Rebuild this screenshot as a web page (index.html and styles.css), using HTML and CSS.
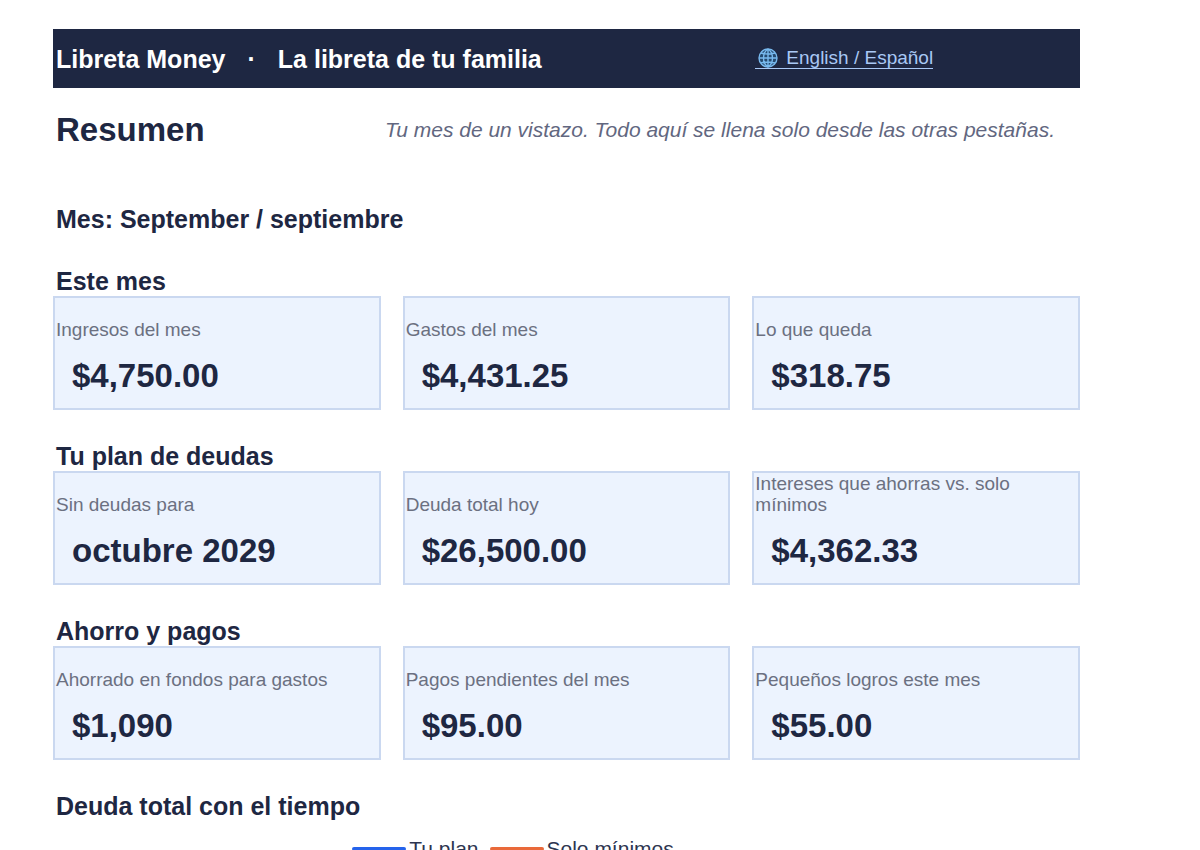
FILE: index.html
```html
<!DOCTYPE html>
<html lang="es">
<head>
<meta charset="utf-8">
<meta name="viewport" content="width=device-width, initial-scale=1">
<title>Libreta Money</title>
<link rel="stylesheet" href="styles.css">
</head>
<body>
<div class="page">
  <header class="banner">
    <div class="brand"><span>Libreta Money</span><span>·</span><span>La libreta de tu familia</span></div>
    <a class="language" href="#"><svg class="globe" viewBox="0 0 20 20" aria-hidden="true"><circle class="globe-fill" cx="10" cy="10" r="9"/><path d="M10 1v18M1 10h18M3 5q7 2 14 0M3 15q7-2 14 0M10 1C4 5 4 15 10 19M10 1c6 4 6 14 0 18"/><circle cx="10" cy="10" r="9"/></svg>English / Español</a>
  </header>
  <main>
    <div class="intro">
      <h1 class="title">Resumen</h1>
      <p class="tagline">Tu mes de un vistazo. Todo aquí se llena solo desde las otras pestañas.</p>
    </div>
    <h2 class="heading month">Mes: September / septiembre</h2>
    <section>
      <h2 class="heading">Este mes</h2>
      <dl class="cards">
        <div class="card"><dt class="label">Ingresos del mes</dt><dd class="value">$4,750.00</dd></div>
        <div class="card"><dt class="label">Gastos del mes</dt><dd class="value">$4,431.25</dd></div>
        <div class="card"><dt class="label">Lo que queda</dt><dd class="value">$318.75</dd></div>
      </dl>
    </section>
    <section>
      <h2 class="heading">Tu plan de deudas</h2>
      <dl class="cards">
        <div class="card"><dt class="label">Sin deudas para</dt><dd class="value">octubre 2029</dd></div>
        <div class="card"><dt class="label">Deuda total hoy</dt><dd class="value">$26,500.00</dd></div>
        <div class="card"><dt class="label">Intereses que ahorras vs. solo mínimos</dt><dd class="value">$4,362.33</dd></div>
      </dl>
    </section>
    <section>
      <h2 class="heading">Ahorro y pagos</h2>
      <dl class="cards">
        <div class="card"><dt class="label">Ahorrado en fondos para gastos</dt><dd class="value">$1,090</dd></div>
        <div class="card"><dt class="label">Pagos pendientes del mes</dt><dd class="value">$95.00</dd></div>
        <div class="card"><dt class="label">Pequeños logros este mes</dt><dd class="value">$55.00</dd></div>
      </dl>
    </section>
    <section>
      <h2 class="heading">Deuda total con el tiempo</h2>
      <ul class="legend">
        <li class="series plan">Tu plan</li>
        <li class="series minimum">Solo mínimos</li>
      </ul>
    </section>
  </main>
</div>
</body>
</html>
```
FILE: styles.css
```css
* { box-sizing: border-box; }

body {
  margin: 0;
  background: #fff;
  color: #1e2742;
  font-family: "Liberation Sans", Arial, sans-serif;
}

h1, h2, p, dl, dd, ul { margin: 0; }

.page { padding: 29px 120px 0 53px; }

.banner,
.cards {
  display: grid;
  grid-template-columns: repeat(3, minmax(0, 1fr));
  column-gap: 22px;
}

.banner {
  align-items: center;
  min-height: 59px;
  background: #1e2742;
  color: #fff;
}

.brand {
  grid-column: span 2;
  display: flex;
  gap: 22px;
  padding-left: 3px;
  font-size: 25px;
  font-weight: bold;
  line-height: 30px;
}

.language {
  display: flex;
  align-items: center;
  gap: 8px;
  justify-self: start;
  margin-left: 3px;
  padding-left: 3px;
  border-bottom: 1px solid #a9c8f5;
  color: #a9c8f5;
  font-size: 19px;
  line-height: 20px;
  text-decoration: none;
}

.globe {
  width: 20px;
  height: 20px;
  fill: none;
  stroke: #78b9ee;
  stroke-width: 1.4;
}

.globe-fill { fill: #254a70; stroke: none; }

.intro {
  display: flex;
  align-items: center;
  justify-content: space-between;
  gap: 22px;
  padding: 22px 25px 0 3px;
}

.title { font-size: 33px; line-height: 40px; }

.tagline {
  color: #626780;
  font-size: 21px;
  font-style: italic;
  line-height: 24px;
}

.heading {
  padding: 31px 0 0 3px;
  font-size: 25px;
  line-height: 30px;
}

.month { padding: 54px 0 1px 3px; }

.card {
  display: grid;
  grid-template-rows: 42px auto;
  min-height: 114px;
  padding-left: 1px;
  background: #ecf3fe;
  border: 2px solid #cad8f0;
}

.label {
  align-self: end;
  padding-right: 40px;
  color: #6b7081;
  font-size: 19px;
  line-height: 21px;
}

.value {
  padding: 16px 0 0 16px;
  font-size: 33px;
  font-weight: bold;
  line-height: 40px;
}

.legend {
  display: flex;
  justify-content: center;
  gap: 11px;
  padding: 16px 107px 0 0;
  list-style: none;
  color: #2d3550;
  font-size: 21px;
  line-height: 24px;
}

.series {
  display: flex;
  align-items: center;
  gap: 3px;
}

.series::before {
  content: "";
  width: 54px;
  height: 4px;
  border-radius: 2px;
}

.plan::before { background: #2563eb; }
.minimum::before { background: #e9693a; }
```
